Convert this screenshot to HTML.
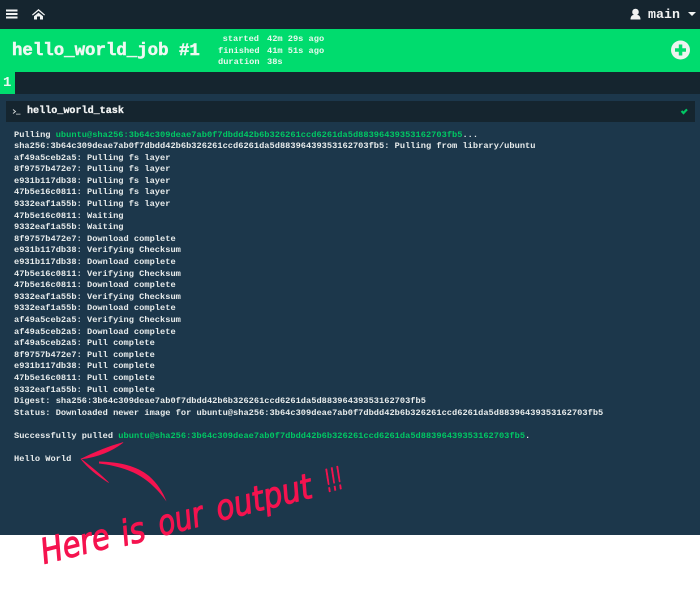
<!DOCTYPE html>
<html><head><meta charset="utf-8">
<style>
html,body{margin:0;padding:0;background:#fff}
#p{position:relative;width:700px;height:591px;overflow:hidden;background:#fff;font-family:"Liberation Mono",monospace;color:#f1f3f3}
.a{position:absolute}
.log{position:absolute;left:14px;top:129.5px;margin:0;font:bold 8.67px/11.6px "Liberation Mono",monospace;letter-spacing:.02px;color:#e8ecec;white-space:pre}
.g{color:#00c864}
.t{position:absolute;font:bold 8.67px/11.5px "Liberation Mono",monospace;color:#e8f8ee;white-space:pre}
.h{font-family:"DejaVu Sans",sans-serif;font-style:oblique;fill:#f5134f;stroke:#f5134f;stroke-width:1;stroke-linejoin:round}
</style></head><body>
<div id="p">
<div class="a" style="left:0;top:0;width:700px;height:29px;background:#15252f"></div>
<div class="a" style="left:0;top:29px;width:700px;height:43px;background:#00dc6e"></div>
<div class="a" style="left:0;top:72px;width:700px;height:22px;background:#15252f"></div>
<div class="a" style="left:0;top:72px;width:15px;height:22px;background:#00dc6e"></div>
<div class="a" style="left:0;top:94px;width:700px;height:441px;background:#1c374b"></div>
<div class="a" style="left:6px;top:101px;width:689px;height:21px;background:#15252f"></div>

<svg class="a" style="left:0;top:0" width="700" height="130" viewBox="0 0 700 130">
<path d="M6 9.500h11.500v2H6zM6 13h11.500v2H6zM6 16.500h11.500v2H6z" fill="#f1f3f3"/>
<path d="M38.500 9l6.500 5.600-.8.900-5.700-4.800-5.700 4.800-.8-.9zM38.500 12.600l4.500 3.700v3.200h-3v-3h-3v3h-3v-3.200z" fill="#f1f3f3"/>
<circle cx="635.500" cy="12" r="3.300" fill="#f1f3f3"/>
<path d="M630.500 19.500c0-3.100 1.500-4.500 3-4.500h4c1.500 0 3 1.400 3 4.500z" fill="#f1f3f3"/>
<path d="M688 12h8l-4 4z" fill="#f1f3f3"/>
<circle cx="680.500" cy="50" r="9.500" fill="#eef3f0"/>
<path d="M678.800 44.500h3.500v3.800h3.700v3.500h-3.700v3.700h-3.500v-3.700h-3.800v-3.500h3.800z" fill="#00dc6e"/>
<path d="M13 109.500l2.500 2-2.500 2" fill="none" stroke="#d8dcdc" stroke-width=".9"/>
<path d="M16 114.200h4.500" stroke="#8a9296" stroke-width="1.200"/>
<path d="M681.500 111l2 2 3.500-3.600" fill="none" stroke="#00c864" stroke-width="2.200"/>
</svg>

<div class="a" style="left:648px;top:7px;font:bold 13.3px/16px 'Liberation Mono',monospace;color:#f1f3f3">main</div>
<div class="a" style="left:12px;top:41px;font:bold 17.4px/22px 'Liberation Mono',monospace;color:#eef8f2;-webkit-text-stroke:.5px #eef8f2">hello_world_job #1</div>
<div class="t" style="left:218px;top:34px;text-align:right;width:41px">started</div>
<div class="t" style="left:218px;top:46px;text-align:right;width:41px">finished</div>
<div class="t" style="left:218px;top:57px;text-align:right;width:41px">duration</div>
<div class="t" style="left:267px;top:34px">42m 29s ago</div>
<div class="t" style="left:267px;top:46px">41m 51s ago</div>
<div class="t" style="left:267px;top:57px">38s</div>
<div class="a" style="left:3px;top:75px;font:bold 14px/17px 'Liberation Mono',monospace;color:#eef8f2">1</div>
<div class="a" style="left:27px;top:106px;font:bold 10.1px/12px 'Liberation Mono',monospace;color:#f1f3f3;-webkit-text-stroke:.3px #f1f3f3">hello_world_task</div>

<pre class="log">Pulling <span class="g">ubuntu@sha256:3b64c309deae7ab0f7dbdd42b6b326261ccd6261da5d88396439353162703fb5</span>...
sha256:3b64c309deae7ab0f7dbdd42b6b326261ccd6261da5d88396439353162703fb5: Pulling from library/ubuntu
af49a5ceb2a5: Pulling fs layer
8f9757b472e7: Pulling fs layer
e931b117db38: Pulling fs layer
47b5e16c0811: Pulling fs layer
9332eaf1a55b: Pulling fs layer
47b5e16c0811: Waiting
9332eaf1a55b: Waiting
8f9757b472e7: Download complete
e931b117db38: Verifying Checksum
e931b117db38: Download complete
47b5e16c0811: Verifying Checksum
47b5e16c0811: Download complete
9332eaf1a55b: Verifying Checksum
9332eaf1a55b: Download complete
af49a5ceb2a5: Verifying Checksum
af49a5ceb2a5: Download complete
af49a5ceb2a5: Pull complete
8f9757b472e7: Pull complete
e931b117db38: Pull complete
47b5e16c0811: Pull complete
9332eaf1a55b: Pull complete
Digest: sha256:3b64c309deae7ab0f7dbdd42b6b326261ccd6261da5d88396439353162703fb5
Status: Downloaded newer image for ubuntu@sha256:3b64c309deae7ab0f7dbdd42b6b326261ccd6261da5d88396439353162703fb5

Successfully pulled <span class="g">ubuntu@sha256:3b64c309deae7ab0f7dbdd42b6b326261ccd6261da5d88396439353162703fb5</span>.

Hello World</pre>

<svg class="a" style="left:0;top:430px" width="700" height="161" viewBox="0 430 700 161">
<path d="M81 459C95 452 110 446 123 442.500C112 451 97 457 81 459z" fill="#f5134f" stroke="#f5134f" stroke-width=".6" stroke-linejoin="round"/>
<path d="M81 459C90 466 100 474 108.500 482.500C98 476 88 468 81 459z" fill="#f5134f" stroke="#f5134f" stroke-width=".6" stroke-linejoin="round"/>
<path d="M99 461.500C120 462 137 466 149 476C157 483 163 492 166.500 501.500C159 491 150 482 140 476C128 469 113 465 99 463.500z" fill="#f5134f"/>
<text class="h" transform="translate(44 564) rotate(-14)" font-size="35" textLength="70" lengthAdjust="spacingAndGlyphs">Here</text>
<text class="h" transform="translate(124 546) rotate(-14)" font-size="35" textLength="24" lengthAdjust="spacingAndGlyphs">is</text>
<text class="h" transform="translate(161 536) rotate(-14)" font-size="35" textLength="46" lengthAdjust="spacingAndGlyphs">our</text>
<text class="h" transform="translate(219 521) rotate(-14)" font-size="35" textLength="98" lengthAdjust="spacingAndGlyphs">output</text>
<text class="h" transform="translate(328 492) rotate(-14)" font-size="31" textLength="17" lengthAdjust="spacingAndGlyphs">!!!</text>
</svg>
</div>
</body></html>
